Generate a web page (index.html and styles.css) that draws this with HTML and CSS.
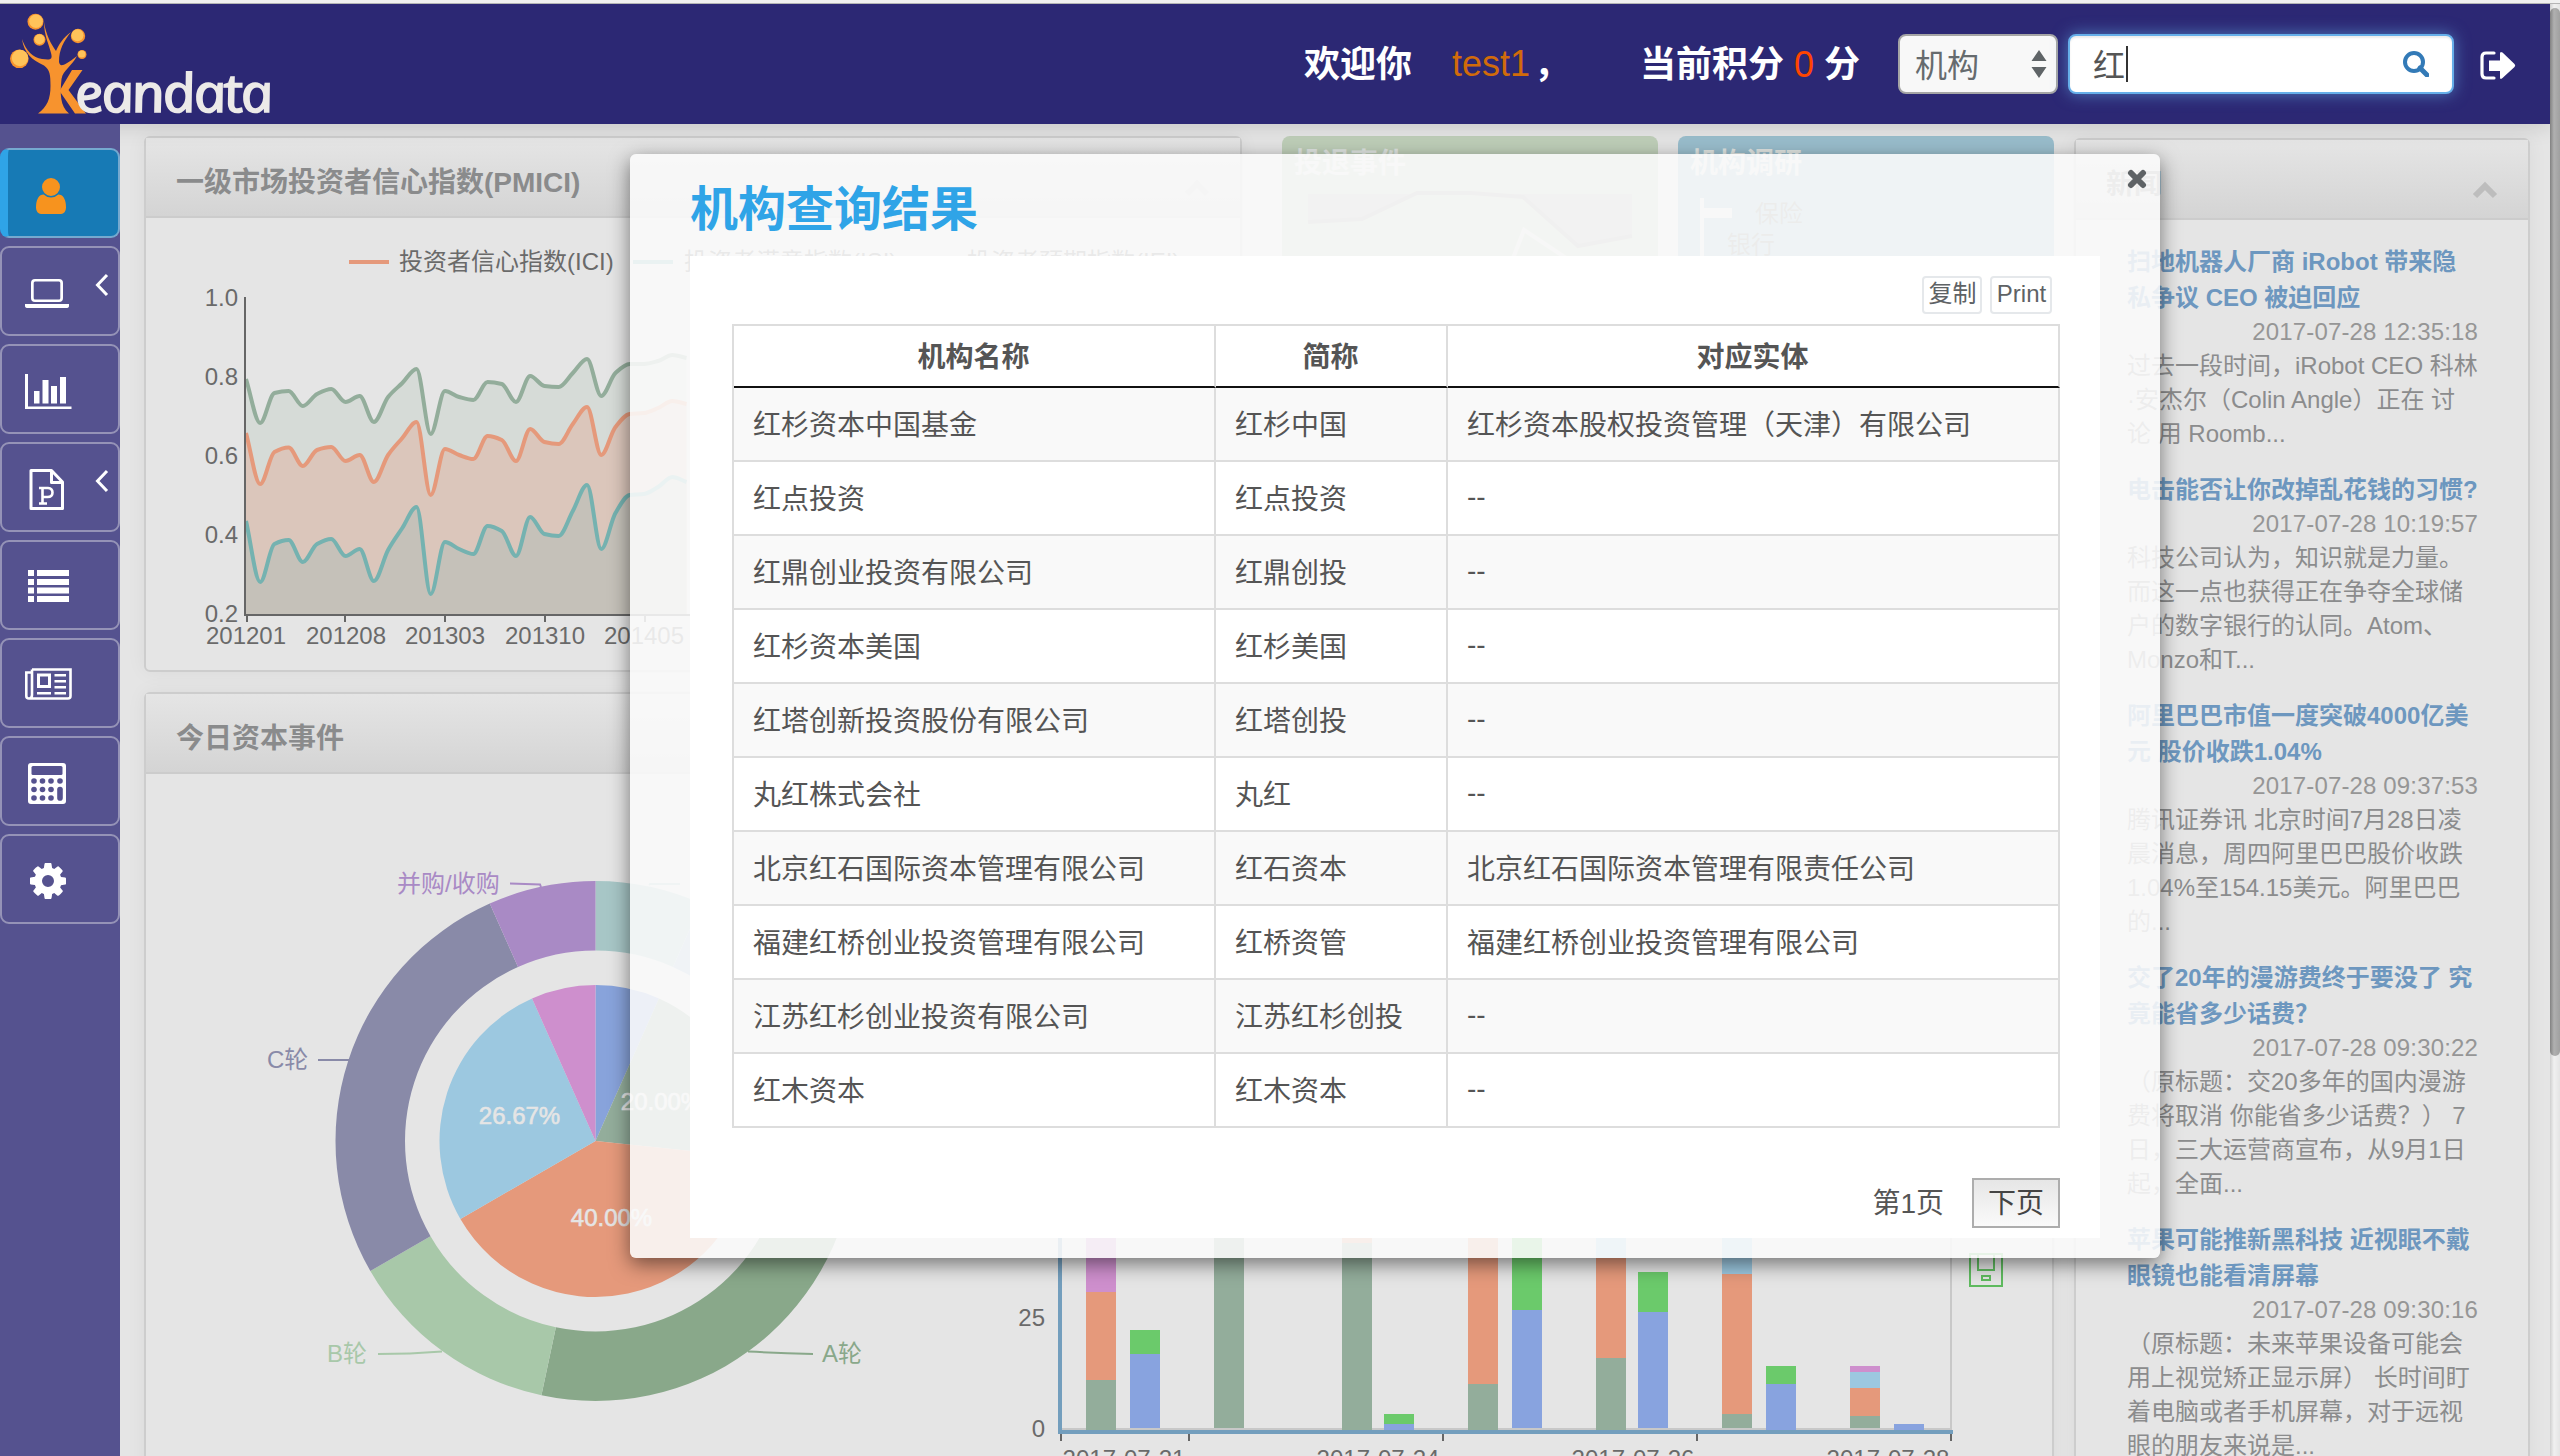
FILE: index.html
```html
<!DOCTYPE html>
<html lang="zh-CN">
<head>
<meta charset="utf-8">
<title>Keandata</title>
<link rel="stylesheet" href="styles.css">
</head>
<body>
<div class="topline"></div>
<div class="page">
<div class="viewport">
  <header class="navbar">
    <svg class="logo" viewBox="0 4 280 120" role="img" aria-label="Keandata">
      <g fill="#f7932e">
        <path d="M38 113.500C47 107 50.500 99 50.500 86C50.500 75 50 70 44 65.500C32 60 24 53 22 39C26 51 33 57.500 42 59C50 60 53 60 51 53C49 45 44 35 44 22C46 35 51 44 56 51C59 44 63 38 71 32C64 41 59 49 59 62C60 67 63 67 77 56C72 66 63 70 61.500 79C60 94 60 106 69 113.500Z"/>
        <path d="M72 70H82.500L68.500 90L86 113.500H75L59.500 91Z"/>
        <circle cx="35.500" cy="21.700" r="8"/><circle cx="39.500" cy="39.800" r="6"/><circle cx="78" cy="36" r="7.200"/><circle cx="19.300" cy="58.800" r="9.300"/><circle cx="82" cy="54.500" r="4.500"/>
      </g>
      <g fill="#ffc35a">
        <circle cx="36" cy="21.200" r="6.800"/><circle cx="39.500" cy="39.300" r="5"/><circle cx="77.500" cy="35.300" r="6"/><circle cx="20" cy="58" r="8.200"/><circle cx="81.800" cy="54" r="3.600"/>
      </g>
      <g transform="translate(78 112) skewX(12)"><text class="logo-text" x="0" y="0" textLength="196" lengthAdjust="spacingAndGlyphs">eandata</text></g>
    </svg>
    <div class="nav-right">
      <span class="welcome">欢迎你</span>
      <span class="user">test1</span>
      <span class="comma">，</span>
      <span class="points">当前积分 <b>0</b> 分</span>
      <div class="select"><span>机构</span><svg viewBox="0 0 16 28"><path d="M8 0L15.500 11H.5ZM8 28L.5 17H15.500Z"/></svg></div>
      <div class="search"><span class="query">红</span><i class="caret"></i>
        <svg viewBox="0 0 26 26"><circle cx="11" cy="11" r="9" fill="none" stroke="#337ab7" stroke-width="4"/><path d="M17 17L24 24" stroke="#337ab7" stroke-width="5" stroke-linecap="round"/></svg>
      </div>
      <svg class="signout" viewBox="0 0 36 30"><path d="M14 2H6Q2 2 2 6V23Q2 27 6 27H14" fill="none" stroke="#fff" stroke-width="3.200" stroke-linecap="round"/><path d="M9 9.500H20V2.500Q20 0 22.500 1.500L34.500 13Q36 14.500 34.500 16L22.500 27Q20 29 20 26.500V20H9Z" fill="#fff"/></svg>
    </div>
  </header>

  <div class="body">
    <nav class="sidebar">
      <a class="item active"><svg class="icon" viewBox="0 0 1792 1792" style="width:42px;height:42px"><path d="M1536 1399q0 109-62.500 187t-150.500 78h-854q-88 0-150.500-78t-62.500-187q0-85 8.500-160.500t31.500-152 58.500-131 94-89 134.500-34.500q131 128 313 128t313-128q76 0 134.500 34.500t94 89 58.500 131 31.500 152 8.500 160.500zm-256-887q0 159-112.500 271.500t-271.500 112.500-271.500-112.500-112.500-271.500 112.500-271.500 271.500-112.500 271.500 112.500 112.500 271.500z"/></svg></a>
      <a class="item"><svg class="icon" viewBox="22 270 52 46"><path fill-rule="evenodd" d="M35 279H59Q63 279 63 283V298Q63 302 59 302H35Q31 302 31 298V283Q31 279 35 279ZM35 281.500Q33.700 281.500 33.700 283V298Q33.700 299.500 35 299.500H59Q60.300 299.500 60.300 298V283Q60.300 281.500 59 281.500ZM25 304H69V306Q69 308 66 308H28Q25 308 25 306Z"/></svg><svg class="chev" viewBox="0 0 14 24"><path d="M12 2L2.500 12L12 22"/></svg></a>
      <a class="item"><svg class="icon" viewBox="22 368 52 46"><path d="M25 374H28V406.500H71.500V409H25ZM34 391H39.500V403.500H34ZM42.500 380H48.500V403.500H42.500ZM51 386H57V403.500H51ZM60 377H66V403.500H60Z"/></svg></a>
      <a class="item"><svg class="icon" viewBox="22 466 52 46"><path d="M31 470.500H51.500L62.500 482V508.500H31ZM51.500 471V482.500H62" fill="none" stroke="#fff" stroke-width="3" stroke-linejoin="round"/><path d="M39 488H48Q52.500 488.500 52.500 492.500Q52.500 497 47.500 497H43M42.500 488V503.500M39 503.500H47" fill="none" stroke="#fff" stroke-width="2.600"/></svg><svg class="chev" viewBox="0 0 14 24"><path d="M12 2L2.500 12L12 22"/></svg></a>
      <a class="item"><svg class="icon" viewBox="22 564 52 46"><path d="M28 570H34V576H28ZM37 570H69V576H37ZM28 579H34V585H28ZM37 579H69V585H37ZM28 587.500H34V593.500H28ZM37 587.500H69V593.500H37ZM28 596H34V602H28ZM37 596H69V602H37Z"/></svg></a>
      <a class="item"><svg class="icon" viewBox="22 662 52 46"><path d="M32 669.500H70.500V696Q70.500 698.500 68 698.500H29Q26.300 698.500 26.300 696V672.500H32M32 669.500V695Q32 698 29.500 698.500" fill="none" stroke="#fff" stroke-width="2.600"/><path fill-rule="evenodd" d="M37 673.500H51V688H37ZM40 676.500V685H48V676.500ZM54.500 674H66V676.500H54.500ZM54.500 680H66V682.500H54.500ZM54.500 686H66V688.500H54.500ZM37 692H51V694.500H37ZM54.500 692H66V694.500H54.500Z"/></svg></a>
      <a class="item"><svg class="icon" viewBox="22 760 52 46"><rect x="28" y="763" width="38" height="41" rx="3"/><g fill="#55528f"><rect x="31.500" y="766" width="31" height="9" rx="1.500"/><circle cx="34" cy="781" r="2.800"/><circle cx="42.500" cy="781" r="2.800"/><circle cx="51" cy="781" r="2.800"/><circle cx="60" cy="781" r="2.800"/><circle cx="34" cy="789.500" r="2.800"/><circle cx="42.500" cy="789.500" r="2.800"/><circle cx="51" cy="789.500" r="2.800"/><circle cx="34" cy="798" r="2.800"/><circle cx="42.500" cy="798" r="2.800"/><circle cx="51" cy="798" r="2.800"/><rect x="57.200" y="786.700" width="5.600" height="14" rx="2.800"/></g></svg></a>
      <a class="item"><svg class="icon" viewBox="0 0 1792 1792" style="width:42px;height:42px"><path d="M1152 896q0-106-75-181t-181-75-181 75-75 181 75 181 181 75 181-75 75-181zm512-109v222q0 12-8 23t-20 13l-185 28q-19 54-39 91 35 50 107 138 10 12 10 25t-9 23q-27 37-99 108t-94 71q-12 0-26-9l-138-108q-44 23-91 38-16 136-29 186-7 28-36 28h-222q-14 0-24.500-8.500t-11.500-21.500l-28-184q-49-16-90-37l-141 107q-10 9-25 9-14 0-25-11-126-114-165-168-7-10-7-23 0-12 8-23 15-21 51-66.500t54-70.500q-27-50-41-99l-183-27q-13-2-21-12.500t-8-23.500v-222q0-12 8-23t19-13l186-28q14-46 39-92-40-57-107-138-10-12-10-24 0-10 9-23 26-36 98.500-107.500t94.500-71.500q13 0 26 10l138 107q44-23 91-38 16-136 29-186 7-28 36-28h222q14 0 24.500 8.500t11.500 21.500l28 184q49 16 90 37l142-107q9-9 24-9 13 0 25 10 129 119 165 170 7 8 7 22 0 12-8 23-15 21-51 66.500t-54 70.500q26 50 41 98l183 28q13 2 21 12.500t8 23.500z"/></svg></a>
    </nav>

    <main class="content">
      <div class="left">
        <div class="row">
          <section class="panel pmici">
            <h2>一级市场投资者信心指数(PMICI)<svg class="faint" viewBox="0 0 26 18"><path d="M3 15L13 5L23 15"/></svg></h2>
            <svg class="chart" id="lines" viewBox="146 218 1094 452">
              <g class="series"></g>
              <path d="M245 297V616M244 615H1200M247 615V622M345 615V622M445 615V622M545 615V622M645 615V622" fill="none" stroke="#666" stroke-width="2"/>
              <g class="label" text-anchor="end"><text x="238" y="307">1.0</text><text x="238" y="386">0.8</text><text x="238" y="465">0.6</text><text x="238" y="544">0.4</text><text x="238" y="623">0.2</text></g>
              <g class="label" text-anchor="middle"><text x="246" y="645">201201</text><text x="346" y="645">201208</text><text x="445" y="645">201303</text><text x="545" y="645">201310</text><text x="644" y="645">201405</text></g>
              <g class="label"><text x="399" y="271">投资者信心指数(ICI)</text><text x="684" y="271">投资者满意指数(ISI)</text><text x="967" y="271">投资者预期指数(IEI)</text></g>
              <path d="M349 262H389" stroke="#e5997b" stroke-width="4"/><path d="M633 262H673" stroke="#75b2b0" stroke-width="4"/><path d="M917 262H957" stroke="#93ad9b" stroke-width="4"/>
            </svg>
          </section>
          <section class="tile green"><h3>投退事件</h3>
            <svg viewBox="1282 186 376 80"><path d="M1308 194H1632V236L1578 246L1523 197L1471 193L1417 193L1362 219L1308 222Z" fill="#b5b3b3"/><path d="M1308 222L1362 219L1417 193H1471L1523 197L1578 246L1632 236" fill="none" stroke="#a6a4a4" stroke-width="4"/><path d="M1510 266L1524 230L1572 262" fill="none" stroke="#dcdfdc" stroke-width="4"/></svg>
          </section>
          <section class="tile blue"><h3>机构调研</h3>
            <svg viewBox="1678 186 376 80"><path d="M1700 198H1704V208H1732V218H1704V266H1700Z" fill="#e5e5e5"/><g class="tile-label"><text x="1755" y="222">保险</text><text x="1727" y="253">银行</text></g></svg>
          </section>
        </div>
        <section class="panel events">
          <h2>今日资本事件</h2>
          <svg class="chart" id="events" viewBox="146 774 1906 700">
            <g class="pie"></g>
            <g class="label" text-anchor="middle"><text class="pct" x="519.500" y="1125">26.67%</text><text class="pct" x="611.500" y="1226.500">40.00%</text><text class="pct" x="661.500" y="1111">20.00%</text></g>
            <g class="label">
              <text x="397" y="893" style="fill:#a98ac5">并购/收购</text><text x="267" y="1069" style="fill:#898aa8">C轮</text><text x="327" y="1363" style="fill:#a8c8a9">B轮</text><text x="822" y="1363" style="fill:#89a88a">A轮</text>
            </g>
            <g fill="none" stroke-width="2"><path d="M510 883.500L540 884.500L541 887" stroke="#a98ac5"/><path d="M318 1060H350" stroke="#898aa8"/><path d="M378 1354Q410 1354 442 1351.500" stroke="#a8c8a9"/><path d="M748 1351.500Q780 1353 813 1354" stroke="#89a88a"/><path d="M649 885L650 884H680" stroke="#a7c6c6"/></g>
            <path d="M1951 1200V1430M1062 1429H1951" stroke="#c8c8c8" stroke-width="2"/>
            <g class="bars"></g>
            <path d="M1060 1200V1432H1953" fill="none" stroke="#739ebd" stroke-width="4"/>
            <path d="M1061 1434V1441M1189 1434V1441M1443 1434V1441M1697 1434V1441M1951 1434V1441" stroke="#666" stroke-width="2"/>
            <g class="label"><text x="1045" y="1326.500" text-anchor="end">25</text><text x="1045" y="1437.500" text-anchor="end">0</text></g>
            <g class="label" text-anchor="middle"><text x="1124" y="1468">2017-07-21</text><text x="1378" y="1468">2017-07-24</text><text x="1633" y="1468">2017-07-26</text><text x="1888" y="1468">2017-07-28</text></g>
            <path d="M1970 1254H2002V1286H1970ZM1978 1254V1270H1994V1254M1982 1276H1990V1280H1982Z" fill="none" stroke="#5fbb5f" stroke-width="2"/>
          </svg>
        </section>
      </div>
      <aside class="panel news">
        <h2>新闻<svg viewBox="0 0 26 18"><path d="M3 15L13 5L23 15"/></svg></h2>
        <div class="list">
          <article><h4>扫地机器人厂商 iRobot 带来隐<br>私争议 CEO 被迫回应</h4><time>2017-07-28 12:35:18</time><p>过去一段时间，iRobot CEO 科林<br>·安杰尔（Colin Angle）正在 讨<br>论 用 Roomb...</p></article>
          <article><h4>电击能否让你改掉乱花钱的习惯?</h4><time>2017-07-28 10:19:57</time><p>科技公司认为，知识就是力量。<br>而这一点也获得正在争夺全球储<br>户的数字银行的认同。Atom、<br>Monzo和T...</p></article>
          <article><h4>阿里巴巴市值一度突破4000亿美<br>元 股价收跌1.04%</h4><time>2017-07-28 09:37:53</time><p>腾讯证券讯 北京时间7月28日凌<br>晨消息，周四阿里巴巴股价收跌<br>1.04%至154.15美元。阿里巴巴<br>的...</p></article>
          <article><h4>交了20年的漫游费终于要没了 究<br>竟能省多少话费？</h4><time>2017-07-28 09:30:22</time><p>（原标题：交20多年的国内漫游<br>费将取消 你能省多少话费？） 7<br>日，三大运营商宣布，从9月1日<br>起，全面...</p></article>
          <article><h4>苹果可能推新黑科技 近视眼不戴<br>眼镜也能看清屏幕</h4><time>2017-07-28 09:30:16</time><p>（原标题：未来苹果设备可能会<br>用上视觉矫正显示屏） 长时间盯<br>着电脑或者手机屏幕，对于远视<br>眼的朋友来说是...</p></article>
        </div>
      </aside>
    </main>
  </div>
</div>
<div class="scrollbar"><div class="thumb"></div></div>
</div>

<div class="modal">
  <h1>机构查询结果</h1>
  <svg class="close" viewBox="0 0 20 20"><path d="M4 4L16 16M16 4L4 16" stroke="#5e6265" stroke-width="6" stroke-linecap="round"/></svg>
  <div class="modal-body">
    <div class="tools"><button>复制</button><button>Print</button></div>
    <table>
      <colgroup><col class="c1"><col class="c2"><col></colgroup>
      <thead><tr><th>机构名称</th><th>简称</th><th>对应实体</th></tr></thead>
      <tbody>
        <tr><td>红杉资本中国基金</td><td>红杉中国</td><td>红杉资本股权投资管理（天津）有限公司</td></tr>
        <tr><td>红点投资</td><td>红点投资</td><td>--</td></tr>
        <tr><td>红鼎创业投资有限公司</td><td>红鼎创投</td><td>--</td></tr>
        <tr><td>红杉资本美国</td><td>红杉美国</td><td>--</td></tr>
        <tr><td>红塔创新投资股份有限公司</td><td>红塔创投</td><td>--</td></tr>
        <tr><td>丸红株式会社</td><td>丸红</td><td>--</td></tr>
        <tr><td>北京红石国际资本管理有限公司</td><td>红石资本</td><td>北京红石国际资本管理有限责任公司</td></tr>
        <tr><td>福建红桥创业投资管理有限公司</td><td>红桥资管</td><td>福建红桥创业投资管理有限公司</td></tr>
        <tr><td>江苏红杉创业投资有限公司</td><td>江苏红杉创投</td><td>--</td></tr>
        <tr><td>红木资本</td><td>红木资本</td><td>--</td></tr>
      </tbody>
    </table>
    <div class="pager"><span>第1页</span><button>下页</button></div>
  </div>
</div>
<script src="charts.js"></script>
</body>
</html>
```
FILE: styles.css
```css
* { box-sizing: border-box; }
body { margin: 0; width: 2560px; height: 1456px; overflow: hidden; position: relative; background: #e5e5e5; font-family: "Liberation Sans", "Noto Sans CJK SC", sans-serif; color: #555; }
h1, h2, h3, h4, p { margin: 0; }
svg { display: block; flex: none; }
.topline { height: 4px; background: #f0f0f0; border-bottom: 1px solid #b4b4b4; }
.page { display: flex; height: 1452px; }
.viewport { width: 2550px; overflow: hidden; }
.scrollbar { width: 10px; padding-top: 4px; background: linear-gradient(90deg, #cfcfcf, #f0f0f0 40%, #e4e4e4); }
.thumb { height: 1048px; border-radius: 5px; background: linear-gradient(90deg, #828282, #b0b0b0 40%, #a0a0a0); }

.navbar { position: relative; display: flex; justify-content: space-between; height: 120px; background: #2c2874; box-shadow: 0 2px 20px rgba(0,0,0,.14); }
.logo { width: 280px; height: 120px; overflow: visible; }
.logo-text { font-family: "Open Sans", sans-serif; font-style: italic; font-size: 53px; font-weight: 500; letter-spacing: -2px; fill: #eceae8; stroke: #eceae8; stroke-width: 1.6px; }
.nav-right { display: flex; align-items: center; padding-right: 34px; color: #fff; font-size: 36px; height: 120px; }
.nav-right span { white-space: pre; }
.welcome, .comma, .points { padding-bottom: 7px; font-weight: 700; }
.welcome { width: 148px; }
.user { color: #d16b0a; width: 82px; }
.comma { width: 106px; }
.points { width: 258px; }
.points b { color: #ff4500; font-weight: 400; }
.select { display: flex; align-items: center; justify-content: space-between; width: 160px; height: 60px; padding: 0 9px 0 15px; border: 2px solid #a5a5a5; border-radius: 8px; background: #f8f8f8; color: #666b6e; font-size: 32px; }
.select span { padding-bottom: 3px; }
.select svg { width: 16px; height: 28px; fill: #5f6467; }
.search { display: flex; align-items: center; width: 386px; height: 60px; margin-left: 10px; padding: 0 23px; border: 2px solid #66afe9; border-radius: 8px; background: #fff; box-shadow: inset 0 2px 2px rgba(0,0,0,.08), 0 0 16px rgba(102,175,233,.6); color: #555; font-size: 32px; }
.query { padding-bottom: 3px; }
.caret { width: 2px; height: 36px; margin-left: 1px; background: #333; }
.search svg { width: 26px; height: 26px; margin-left: auto; }
.signout { width: 36px; height: 30px; margin: 4px 0 0 26px; }

.body { display: flex; height: 1332px; }
.sidebar { position: relative; display: flex; flex-direction: column; gap: 8px; width: 120px; padding-top: 24px; background: #55528f; }
.item { display: flex; align-items: center; height: 90px; padding: 4px 0 0 20px; border: 2px solid #9593b7; border-radius: 9px; fill: #fff; }
.item .icon { width: 52px; height: 46px; }
.item:last-child { padding-left: 25px; }
.item.active { border-color: #75a9cf; border-left: 8px solid #2fa4e7; background: #177ab5; fill: #f7931e; padding: 6px 0 0 22px; }
.chev { width: 14px; height: 24px; margin: 0 0 16px 21px; fill: none; stroke: #fff; stroke-width: 3; }

.content { display: flex; gap: 20px; padding: 12px 0 0 24px; }
.left { display: flex; flex-direction: column; gap: 20px; width: 1910px; }
.row { display: flex; gap: 20px; height: 536px; }
.panel { border: 2px solid #cdcdcd; border-radius: 6px; box-shadow: 0 0 20px rgba(0,0,0,.05); background: #e5e5e5; }
.panel h2 { display: flex; align-items: center; justify-content: space-between; height: 80px; padding: 12px 30px 0 30px; border-bottom: 2px solid #ccc; background: linear-gradient(#e5e5e5, #d4d4d4); color: #8a8b8c; font-size: 28px; line-height: 40px; }
.panel h2 svg { width: 26px; height: 18px; margin-top: 9px; fill: none; stroke: #bdbdbd; stroke-width: 6; }
.panel h2 .faint { stroke: #cbcbcb; }
.pmici { width: 1098px; margin-right: 20px; }
.chart { width: 100%; }
.events { height: 800px; }
.label { font-size: 24px; fill: #6a6a6a; transform: translateY(-1px); }
.pct { fill: #e5e5e5; stroke: #e5e5e5; stroke-width: .6px; }
.tile { width: 376px; height: 180px; border-radius: 8px; }
.tile h3 { height: 50px; padding: 8px 12px 0; color: #e0e5e2; font-size: 28px; line-height: 40px; }
.tile svg { width: 376px; height: 80px; }
.tile-label { font-size: 24px; fill: #82857f; }
.green { background: #bfcfb9; }
.blue { background: #9abecd; }
.news { width: 456px; height: 1500px; margin-top: 2px; }
.list { display: flex; flex-direction: column; gap: 20px; padding: 24px 50px 0 51px; font-size: 24px; line-height: 34px; color: #8b8c8d; white-space: nowrap; }
.list h4 { font-size: 24px; line-height: 36px; color: #6d97bf; }
.list time { display: block; margin: -1px 0 1px; text-align: right; color: #969696; letter-spacing: .15px; }
.list p { margin: -1px 0 1px; }

.modal { position: absolute; left: 630px; top: 154px; width: 1530px; height: 1104px; padding: 0 60px; border-radius: 6px; background: rgba(250,250,250,.88); box-shadow: 0 6px 20px rgba(0,0,0,.5); }
.modal h1 { height: 102px; color: #2fa4e7; font-size: 48px; font-weight: 700; line-height: 112px; }
.close { position: absolute; right: 13px; top: 15px; width: 20px; height: 20px; }
.modal-body { height: 982px; padding: 20px 40px 0 42px; background: #fff; }
.modal button { font-family: inherit; margin: 0; padding: 0; }
.tools { display: flex; justify-content: flex-end; gap: 8px; height: 48px; padding-right: 8px; }
.modal .tools button { width: 60px; height: 38px; padding: 0 0 2px 1px; border: 2px solid #e5e8eb; border-radius: 4px; background: #fff; color: #5e6265; font-size: 24px; line-height: 32px; }
.modal .tools button + button { width: 62px; }
table { width: 1328px; table-layout: fixed; border-collapse: separate; border-spacing: 0; border-left: 2px solid #ddd; font-size: 28px; border-top: 2px solid #ddd; }
.c1 { width: 482px; }
.c2 { width: 232px; }
th, td { padding: 0 20px 3px 19px; border-right: 2px solid #ddd; border-bottom: 2px solid #ddd; }
th { height: 62px; border-bottom-color: #111; }
td { height: 74px; }
tbody tr:nth-child(odd) { background: #f9f9f9; }
.pager { display: flex; justify-content: flex-end; align-items: center; gap: 28px; margin-top: 50px; font-size: 28px; }
.pager span { padding-bottom: 5px; }
.modal .pager button { width: 88px; height: 50px; padding-bottom: 4px; border: 2px solid #adadad; background: linear-gradient(#e6e6e6, #fafafa); color: #444; font-size: 28px; }
```
FILE: charts.js
```js
const NS = 'http://www.w3.org/2000/svg';
function add(parent, tag, attrs) {
  const el = document.createElementNS(NS, tag);
  for (const k in attrs) el.setAttribute(k, attrs[k]);
  parent.appendChild(el);
}

// Monotone cubic curve through evenly spaced values.
function curve(ys, x0, step) {
  const d = ys.slice(1).map((y, i) => y - ys[i]);
  const m = ys.map((_, i) => {
    if (i === 0) return d[0];
    if (i === ys.length - 1) return d[i - 1];
    if (d[i - 1] * d[i] <= 0) return 0;
    return 2 * d[i - 1] * d[i] / (d[i - 1] + d[i]);
  });
  let p = `M${x0} ${ys[0]}`;
  for (let i = 0; i < d.length; i++) {
    const x = x0 + i * step;
    p += `C${x + step / 3} ${ys[i] + m[i] / 3} ${x + step * 2 / 3} ${ys[i + 1] - m[i + 1] / 3} ${x + step} ${ys[i + 1]}`;
  }
  return p;
}
const series = [
  ['#93ad9b', '#d6dbd7', [379,423,393,391,406,394,389,402,396,422,397,383,369,434,391,397,400,382,384,402,376,386,387,373,359,396,373,364,364,361,355,358]],
  ['#e5997b', '#dbc6bb', [433,484,452,447.5,466,450,447,461,455,482,455,438,422,495,449,455,459,436,440,461,429,442,444,424,407,455,427,414,413,408,401,404]],
  ['#75b2b0', '#c5c1b9', [521,582,544,540,562,544,539,556,549,581,550,528,507,594,542,549,554,526,531,556,517,534,536,511,485,549,513,495,494,487,477,482]]
];
const lines = document.querySelector('.series');
for (const [stroke, fill, ys] of series) {
  const d = curve(ys, 246, 14.21);
  add(lines, 'path', { d: d + `L${246 + 31 * 14.21} 615H246Z`, fill });
  add(lines, 'path', { d, fill: 'none', stroke, 'stroke-width': 4, 'stroke-linejoin': 'round' });
}

// Ring and pie sectors: [from degree, to degree, colour].
const pie = document.querySelector('.pie');
const at = (r, deg) => {
  const a = deg * Math.PI / 180;
  return `${595.5 + r * Math.sin(a)} ${1141 - r * Math.cos(a)}`;
};
function sector(r0, r1, [a, b, fill]) {
  const big = b - a > 180 ? 1 : 0;
  add(pie, 'path', { fill, d: `M${at(r0, a)}L${at(r1, a)}A${r1} ${r1} 0 ${big} 1 ${at(r1, b)}L${at(r0, b)}A${r0} ${r0} 0 ${big} 0 ${at(r0, a)}Z` });
}
[[0,24,'#a7c6c6'],[24,96,'#a3bdd6'],[96,192,'#89a88a'],[192,240,'#a8c8a9'],[240,336,'#898aa8'],[336,360,'#a98ac5']].forEach(s => sector(190.5, 260, s));
[[0,24,'#88a3db'],[24,96,'#93ad9b'],[96,240,'#e5997b'],[240,336,'#9cc8e0'],[336,360,'#ce8fcd']].forEach(s => sector(0.01, 156, s));

// Stacked bars: [x, bottom, [top, colour], ...] from the lowest segment up.
const G = '#93ad9b', O = '#e5997b', P = '#ce8fcd', L = '#9cc8e0', B = '#88a3df', N = '#6bca6b';
const bars = document.querySelector('.bars');
[
  [1086,1430,[1380,G],[1292,O],[1210,P]], [1130,1428,[1354,B],[1330,N]],
  [1214,1428,[1210,G]],
  [1342,1430,[1243,G],[1210,O]], [1384,1430,[1424,B],[1414,N]],
  [1468,1430,[1384,G],[1210,O]], [1512,1428,[1310,B],[1210,N]],
  [1596,1430,[1358,G],[1258,O],[1210,L]], [1638,1428,[1312,B],[1272,N]],
  [1722,1428,[1414,G],[1274,O],[1210,L]], [1766,1430,[1384,B],[1366,N]],
  [1850,1428,[1416,G],[1388,O],[1372,L],[1366,P]], [1894,1430,[1424,B]]
].forEach(([x, bottom, ...parts]) => {
  for (const [top, fill] of parts) {
    add(bars, 'rect', { x, y: top, width: 30, height: bottom - top, fill });
    bottom = top;
  }
});
```
